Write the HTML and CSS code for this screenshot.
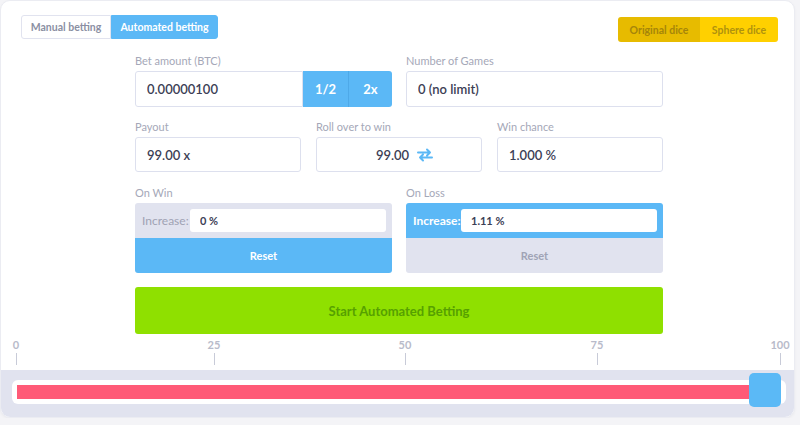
FILE: index.html
```html
<!DOCTYPE html>
<html lang="en">
<head>
  <meta charset="UTF-8" />
  <meta name="viewport" content="width=device-width, initial-scale=1" />
  <title>Dice - Automated betting</title>
  <link rel="stylesheet" href="styles.css">
</head>
<body>

<div class="card">
  <div class="top">
    <div class="tabs">
      <button class="tab">Manual betting</button>
      <button class="tab active">Automated betting</button>
    </div>
    <div class="dice">
      <button class="dice-btn active">Original dice</button>
      <button class="dice-btn">Sphere dice</button>
    </div>
  </div>

  <form class="form">
    <div class="row two">
      <div class="field">
        <label>Bet amount (BTC)</label>
        <div class="group">
          <input class="box big" value="0.00000100">
          <button type="button" class="mini half">1/2</button>
          <button type="button" class="mini">2x</button>
        </div>
      </div>
      <div class="field">
        <label>Number of Games</label>
        <input class="box big" value="0 (no limit)">
      </div>
    </div>

    <div class="row three">
      <div class="field">
        <label>Payout</label>
        <input class="box" value="99.00 x">
      </div>
      <div class="field">
        <label>Roll over to win</label>
        <div class="box roll">
          <span>99.00</span>
          <svg width="16" height="14" viewBox="0 0 16 14">
            <path d="M1 4.5h12M10 1.5l3 3-3 3M15 9.5H3M6 6.5l-3 3 3 3" fill="none" stroke="#5bb8f6" stroke-width="2" stroke-linecap="round" stroke-linejoin="round"/>
          </svg>
        </div>
      </div>
      <div class="field">
        <label>Win chance</label>
        <input class="box" value="1.000 %">
      </div>
    </div>

    <div class="row two">
      <div class="field">
        <label>On Win</label>
        <div class="strategy">
          <div class="inc">
            <span>Increase:</span>
            <input class="inc-input" value="0 %">
          </div>
          <button type="button" class="reset on">Reset</button>
        </div>
      </div>
      <div class="field">
        <label>On Loss</label>
        <div class="strategy">
          <div class="inc on">
            <span>Increase:</span>
            <input class="inc-input" value="1.11 %">
          </div>
          <button type="button" class="reset">Reset</button>
        </div>
      </div>
    </div>

    <button type="button" class="start">Start Automated Betting</button>
  </form>

  <div class="scale">
    <div class="tick t0"><span>0</span><i></i></div>
    <div class="tick t25"><span>25</span><i></i></div>
    <div class="tick t50"><span>50</span><i></i></div>
    <div class="tick t75"><span>75</span><i></i></div>
    <div class="tick t100"><span>100</span><i></i></div>
  </div>

  <div class="slider">
    <div class="track">
      <div class="fill"></div>
      <div class="handle"></div>
    </div>
  </div>
</div>

</body>
</html>
```

FILE: styles.css
```css
body {
  margin: 0;
  background: #f4f4f7;
  font-family: Lato, "Open Sans", sans-serif;
  color: #3c4055;
}
button, input {
  font-family: inherit;
}
.card {
  width: 795px;
  height: 418px;
  box-sizing: border-box;
  background: white;
  border: 1px solid #ebecf2;
  border-radius: 10px;
  overflow: hidden;
  box-shadow: 0 1px 3px rgb(0 0 0 / 0.04);
}
.top {
  display: flex;
  justify-content: space-between;
  padding: 14px 16px 0 20px;
}
.tabs {
  display: flex;
  height: 24px;
}
.tab {
  width: 90px;
  padding: 0;
  border: 1px solid #e1e3ef;
  background: white;
  color: #8b8fa3;
  font-size: 10.5px;
  font-weight: 700;
  white-space: nowrap;
  border-radius: 3px 0 0 3px;
}
.tab.active {
  width: 107px;
  background: #5bb8f6;
  border-color: #5bb8f6;
  color: white;
  border-radius: 0 3px 3px 0;
}
.dice {
  display: flex;
  height: 25px;
  margin-top: 2px;
  border-radius: 3px;
  overflow: hidden;
}
.dice-btn {
  width: 78px;
  padding: 0;
  border: none;
  background: #ffd000;
  color: #b0920e;
  font-size: 10.5px;
  font-weight: 700;
  white-space: nowrap;
}
.dice-btn.active {
  width: 82px;
  background: #e7bb00;
  color: #a5850a;
}
.form {
  width: 528px;
  margin: 12px 0 0 134px;
}
.row {
  display: grid;
  gap: 14px;
  margin-bottom: 13px;
}
.row.two {
  grid-template-columns: 1fr 1fr;
}
.row.three {
  grid-template-columns: 1fr 1fr 1fr;
  gap: 15px;
  margin-bottom: 14px;
}
.field label {
  display: block;
  font-size: 11px;
  line-height: 14px;
  color: #a5a8b8;
  margin-bottom: 3px;
}
.box {
  display: block;
  width: 100%;
  box-sizing: border-box;
  height: 35px;
  border: 1px solid #dde0ee;
  border-radius: 3px;
  padding: 0 11px;
  font-size: 13px;
  font-weight: 600;
  color: #3c4055;
  background: white;
}
.box.big {
  height: 36px;
}
.group {
  display: flex;
}
.group .box {
  flex: 1;
  min-width: 0;
  border-radius: 3px 0 0 3px;
}
.mini {
  border: none;
  background: #5bb8f6;
  color: white;
  font-size: 13px;
  font-weight: 700;
  width: 43px;
}
.mini.half {
  width: 46px;
  border-right: 1px solid #4ea9e8;
}
.mini:last-child {
  border-radius: 0 3px 3px 0;
}
.roll {
  display: flex;
  align-items: center;
  justify-content: center;
  gap: 8px;
  padding-left: 22px;
}
.strategy {
  border-radius: 3px;
  overflow: hidden;
}
.inc {
  display: flex;
  align-items: center;
  height: 35px;
  padding: 0 6px 0 7px;
  background: #e1e3ef;
  font-size: 12px;
  color: #9fa2b4;
}
.inc.on {
  background: #5bb8f6;
  color: white;
  font-weight: 700;
}
.inc span {
  width: 48px;
}
.inc-input {
  flex: 1;
  min-width: 0;
  height: 23px;
  box-sizing: border-box;
  border: none;
  border-radius: 3px;
  padding: 0 10px;
  font-size: 11px;
  font-weight: 700;
  color: #3c4055;
  background: white;
}
.reset {
  display: block;
  width: 100%;
  height: 35px;
  border: none;
  background: #e1e3ef;
  color: #a0a3b5;
  font-size: 11px;
  font-weight: 700;
}
.reset.on {
  background: #5bb8f6;
  color: white;
}
.start {
  display: block;
  width: 100%;
  height: 47px;
  margin-top: 14px;
  border: none;
  border-radius: 3px;
  background: #8fe000;
  color: #56a000;
  font-size: 13px;
  font-weight: 700;
}
.scale {
  position: relative;
  height: 27px;
  margin-top: 4px;
}
.tick {
  position: absolute;
  top: 0;
  width: 30px;
  margin-left: -16px;
  display: flex;
  flex-direction: column;
  align-items: center;
  font-size: 11px;
  font-weight: 700;
  color: #b8bbca;
}
.tick span {
  line-height: 14px;
}
.tick i {
  width: 1px;
  height: 12px;
  margin-top: 1px;
  background: #c8cbd8;
}
.t0 { left: 16px; }
.t25 { left: 214px; }
.t50 { left: 405px; }
.t75 { left: 597px; }
.t100 { left: 780px; }
.slider {
  background: #e1e3ef;
  height: 48px;
  margin-top: 5px;
  padding: 10px 8px 0 11px;
  box-sizing: border-box;
}
.track {
  position: relative;
  height: 24px;
  box-sizing: border-box;
  padding: 5px;
  background: white;
  border-radius: 6px;
}
.fill {
  height: 14px;
  background: #ff5a77;
}
.handle {
  position: absolute;
  right: 5px;
  top: -7px;
  width: 32px;
  height: 34px;
  border-radius: 5px;
  background: #5bb9f6;
}
```
